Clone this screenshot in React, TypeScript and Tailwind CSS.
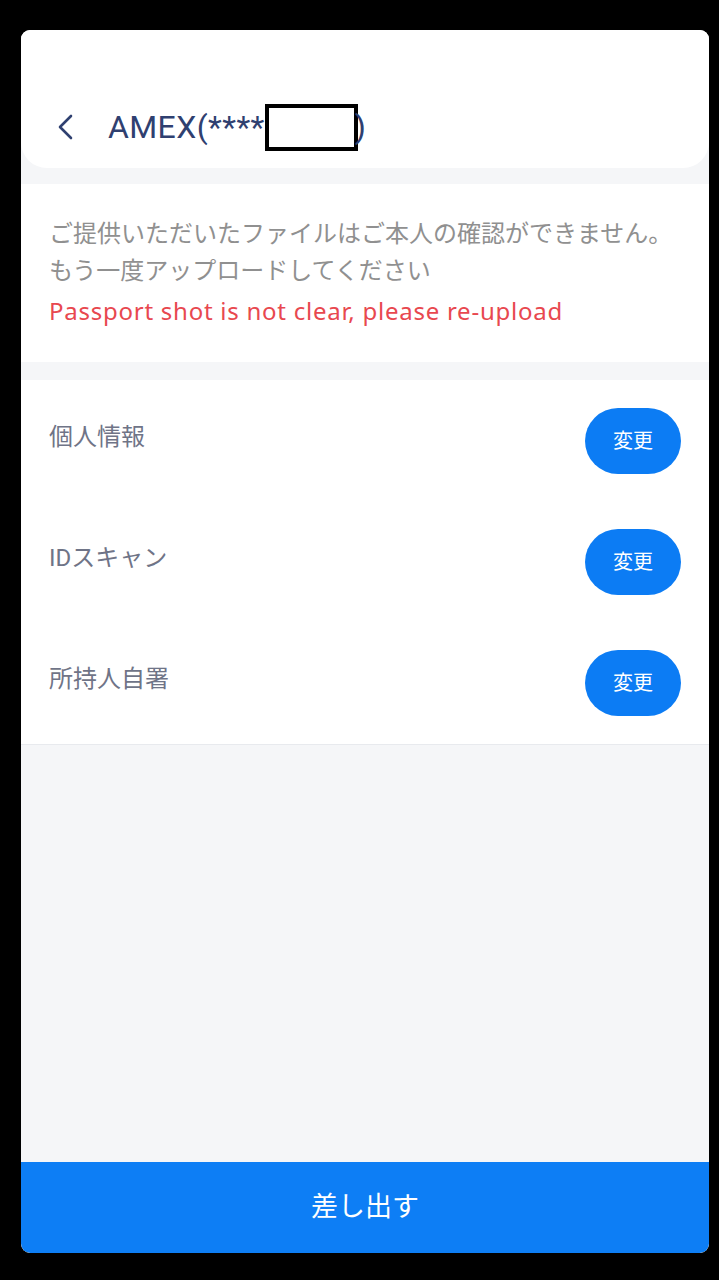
const rows = ['個人情報', 'IDスキャン', '所持人自署']

const font = { fontFamily: 'Roboto, "Noto Sans CJK JP", sans-serif' }

export default function App() {
  return (
    <div className="w-[719px] h-[1280px] bg-black pt-[30px] pl-[21px] pr-[10px] pb-[27px]" style={font}>
      <div className="flex flex-col h-full rounded-[9px] overflow-hidden bg-[#f5f6f8]">
        {/* Header */}
        <div className="h-[138px] shrink-0 bg-white rounded-b-[26px] pt-[75px]">
          <div className="flex items-center h-[44px] pl-[35px]">
            <svg width="18" height="26" viewBox="0 0 18 26" fill="none">
              <polyline points="15,2 4,13 15,24" stroke="#2f4070" strokeWidth="2.6" strokeLinecap="round" strokeLinejoin="round" />
            </svg>
            <div className="ml-[34px] flex items-center text-[32px] tracking-[0.4px] text-[#2f4070] leading-none">
              <span>AMEX(****</span>
              <span className="w-[93px] h-[47px] border-[4px] border-black bg-white ml-0 -mr-[3px]" />
              <span>)</span>
            </div>
          </div>
        </div>

        {/* Message */}
        <div className="mt-4 h-[178px] shrink-0 bg-white px-7 pt-[32px] text-[24px] leading-[37px]">
          <p className="text-[#909090]">ご提供いただいたファイルはご本人の確認ができません。</p>
          <p className="text-[#909090]">もう一度アップロードしてください</p>
          <p className="text-[#e8484f] mt-[2px] tracking-[0.75px]" style={{ fontFamily: '"Noto Sans", sans-serif' }}>
            Passport shot is not clear, please re-upload
          </p>
        </div>

        {/* Items */}
        <div className="mt-[18px] shrink-0 bg-white pl-7 pr-[28px] py-[28px] flex flex-col gap-[55px] border-b border-[#e8eaee]">
          {rows.map((label) => (
            <div key={label} className="flex items-center justify-between h-[66px]">
              <span className="text-[24px] text-[#6f7487] mb-[8px]">{label}</span>
              <button className="w-[96px] h-[66px] rounded-full bg-[#0c7cf4] text-white text-[20px]">
                変更
              </button>
            </div>
          ))}
        </div>

        <div className="flex-1" />

        <button className="h-[91px] shrink-0 bg-[#0d7ef5] text-white text-[27px] rounded-b-[9px]">
          差し出す
        </button>
      </div>
    </div>
  )
}
